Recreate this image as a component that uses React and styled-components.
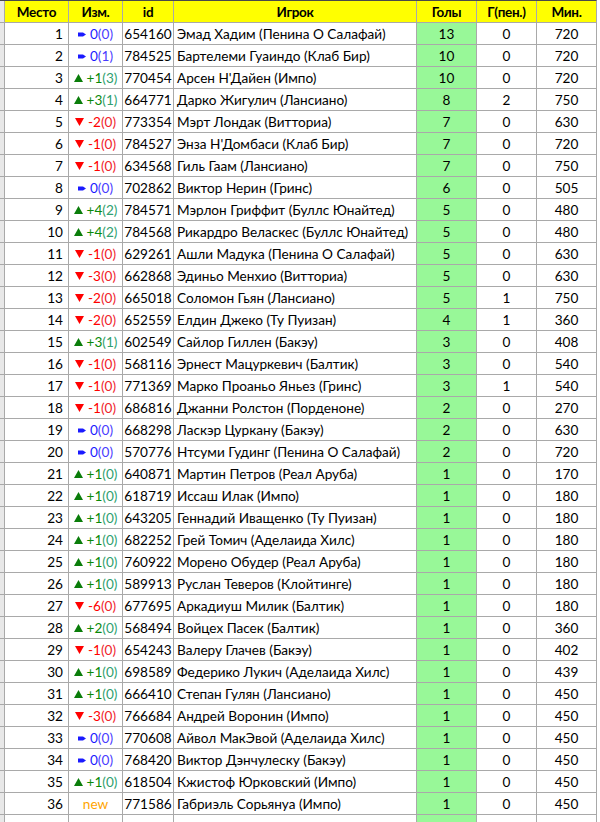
import React from "react";
import styled, { createGlobalStyle } from "styled-components";

const GlobalStyle = createGlobalStyle`
  html, body { margin: 0; padding: 0; background: #ffffff; }
  body { overflow: hidden; font-family: Lato, "Open Sans", "Liberation Sans", sans-serif; }
  #root { height: 822px; overflow: hidden; }
`;

const LINE = "#a9a9a9";
const COLS = "4px 63px 53px 50px 242px 59px 59px 59px";

const Sheet = styled.div`
  display: flex;
  flex-direction: column;
  gap: 1px;
  width: 596px;
  background: ${LINE};
  border-top: 1px solid #4a4a4a;
  border-right: 1px solid ${LINE};
`;

const Row = styled.div`
  display: grid;
  grid-template-columns: ${COLS};
  grid-auto-rows: 21px;
  column-gap: 1px;
  background: ${LINE};
`;

const Strip = styled.div`
  background: #e8e8e8;
`;

const Cell = styled.div`
  display: flex;
  align-items: flex-end;
  justify-content: ${(p) => p.$align || "center"};
  padding: 0 ${(p) => (p.$align === "flex-end" ? "5px" : "0")} 2px ${(p) => (p.$align === "flex-start" ? "3px" : "0")};
  background: ${(p) => (p.$green ? "#98f898" : "#ffffff")};
  color: #000;
  font-size: 13.6px;
  line-height: 16px;
  white-space: nowrap;
  overflow: hidden;
`;

const HeadCell = styled.div`
  display: flex;
  align-items: flex-end;
  justify-content: center;
  padding-bottom: 2px;
  background: #ffff00;
  color: #000;
  font-size: 13.5px;
  font-weight: 700;
  letter-spacing: -0.3px;
  line-height: 16px;
  white-space: nowrap;
`;

const Change = styled.span`
  display: inline-flex;
  align-items: center;
  gap: 4px;
  color: ${(p) => p.$color};
`;

const Sub = styled.span`
  color: ${(p) => p.$color};
`;

const IconBox = styled.svg`
  display: block;
  flex: none;
`;

const UpIcon = () => (
  <IconBox width="9" height="8" viewBox="0 0 9 8">
    <polygon points="4.5,0 9,8 0,8" fill="#0a7d0a" />
  </IconBox>
);

const DownIcon = () => (
  <IconBox width="9" height="8" viewBox="0 0 9 8">
    <polygon points="0,0 9,0 4.5,8" fill="#ff0000" />
  </IconBox>
);

const FlatIcon = () => (
  <IconBox width="8" height="5" viewBox="0 0 8 5">
    <polygon points="0,0.5 5,0.5 8,2.5 5,4.5 0,4.5" fill="#1a1aff" />
  </IconBox>
);

const rows = [
  [1, "f", "0", "0", "654160", "Эмад Хадим (Пенина О Салафай)", 13, 0, 720],
  [2, "f", "0", "1", "784525", "Бартелеми Гуаиндо (Клаб Бир)", 10, 0, 720],
  [3, "u", "+1", "3", "770454", "Арсен Н'Дайен (Импо)", 10, 0, 720],
  [4, "u", "+3", "1", "664771", "Дарко Жигулич (Лансиано)", 8, 2, 750],
  [5, "d", "-2", "0", "773354", "Мэрт Лондак (Витториа)", 7, 0, 630],
  [6, "d", "-1", "0", "784527", "Энза Н'Домбаси (Клаб Бир)", 7, 0, 720],
  [7, "d", "-1", "0", "634568", "Гиль Гаам (Лансиано)", 7, 0, 750],
  [8, "f", "0", "0", "702862", "Виктор Нерин (Гринс)", 6, 0, 505],
  [9, "u", "+4", "2", "784571", "Мэрлон Гриффит (Буллс Юнайтед)", 5, 0, 480],
  [10, "u", "+4", "2", "784568", "Рикардро Веласкес (Буллс Юнайтед)", 5, 0, 480],
  [11, "d", "-1", "0", "629261", "Ашли Мадука (Пенина О Салафай)", 5, 0, 630],
  [12, "d", "-3", "0", "662868", "Эдиньо Менхио (Витториа)", 5, 0, 630],
  [13, "d", "-2", "0", "665018", "Соломон Гьян (Лансиано)", 5, 1, 750],
  [14, "d", "-2", "0", "652559", "Елдин Джеко (Ту Пуизан)", 4, 1, 360],
  [15, "u", "+3", "1", "602549", "Сайлор Гиллен (Бакэу)", 3, 0, 408],
  [16, "d", "-1", "0", "568116", "Эрнест Мацуркевич (Балтик)", 3, 0, 540],
  [17, "d", "-1", "0", "771369", "Марко Проаньо Яньез (Гринс)", 3, 1, 540],
  [18, "d", "-1", "0", "686816", "Джанни Ролстон (Порденоне)", 2, 0, 270],
  [19, "f", "0", "0", "668298", "Ласкэр Цуркану (Бакэу)", 2, 0, 630],
  [20, "f", "0", "0", "570776", "Нтсуми Гудинг (Пенина О Салафай)", 2, 0, 720],
  [21, "u", "+1", "0", "640871", "Мартин Петров (Реал Аруба)", 1, 0, 170],
  [22, "u", "+1", "0", "618719", "Иссаш Илак (Импо)", 1, 0, 180],
  [23, "u", "+1", "0", "643205", "Геннадий Иващенко (Ту Пуизан)", 1, 0, 180],
  [24, "u", "+1", "0", "682252", "Грей Томич (Аделаида Хилс)", 1, 0, 180],
  [25, "u", "+1", "0", "760922", "Морено Обудер (Реал Аруба)", 1, 0, 180],
  [26, "u", "+1", "0", "589913", "Руслан Теверов (Клойтинге)", 1, 0, 180],
  [27, "d", "-6", "0", "677695", "Аркадиуш Милик (Балтик)", 1, 0, 180],
  [28, "u", "+2", "0", "568494", "Войцех Пасек (Балтик)", 1, 0, 360],
  [29, "d", "-1", "0", "654243", "Валеру Глачев (Бакэу)", 1, 0, 402],
  [30, "u", "+1", "0", "698589", "Федерико Лукич (Аделаида Хилс)", 1, 0, 439],
  [31, "u", "+1", "0", "666410", "Степан Гулян (Лансиано)", 1, 0, 450],
  [32, "d", "-3", "0", "766684", "Андрей Воронин (Импо)", 1, 0, 450],
  [33, "f", "0", "0", "770608", "Айвол МакЭвой (Аделаида Хилс)", 1, 0, 450],
  [34, "f", "0", "0", "768420", "Виктор Дэнчулеску (Бакэу)", 1, 0, 450],
  [35, "u", "+1", "0", "618504", "Кжистоф Юрковский (Импо)", 1, 0, 450],
  [36, "n", "", "", "771586", "Габриэль Сорьянуа (Импо)", 1, 0, 450],
];

const STYLES = {
  u: { main: "#0a8a0a", sub: "#2f9f6f", Icon: UpIcon },
  d: { main: "#ff0000", sub: "#f0242c", Icon: DownIcon },
  f: { main: "#1a1aff", sub: "#4a3cff", Icon: FlatIcon },
};

const NewTag = styled.span`
  color: #ffa500;
`;

function ChangeCell({ kind, main, sub }) {
  if (kind === "n") {
    return (
      <Cell>
        <NewTag>new</NewTag>
      </Cell>
    );
  }
  const s = STYLES[kind];
  const Icon = s.Icon;
  return (
    <Cell>
      <Change $color={s.main}>
        <Icon />
        <span>
          {main}
          <Sub $color={s.sub}>({sub})</Sub>
        </span>
      </Change>
    </Cell>
  );
}

export default function App() {
  return (
    <>
      <GlobalStyle />
      <Sheet>
        <Row>
          <Strip />
          <HeadCell>Место</HeadCell>
          <HeadCell>Изм.</HeadCell>
          <HeadCell>id</HeadCell>
          <HeadCell>Игрок</HeadCell>
          <HeadCell>Голы</HeadCell>
          <HeadCell>Г(пен.)</HeadCell>
          <HeadCell>Мин.</HeadCell>
        </Row>
        {rows.map(([place, kind, main, sub, id, name, goals, pen, mins]) => (
          <Row key={place}>
            <Strip />
            <Cell $align="flex-end">{place}</Cell>
            <ChangeCell kind={kind} main={main} sub={sub} />
            <Cell>{id}</Cell>
            <Cell $align="flex-start">{name}</Cell>
            <Cell $green>{goals}</Cell>
            <Cell>{pen}</Cell>
            <Cell>{mins}</Cell>
          </Row>
        ))}
        <Row>
          <Strip />
          <Cell />
          <Cell />
          <Cell />
          <Cell />
          <Cell $green />
          <Cell />
          <Cell />
        </Row>
      </Sheet>
    </>
  );
}
